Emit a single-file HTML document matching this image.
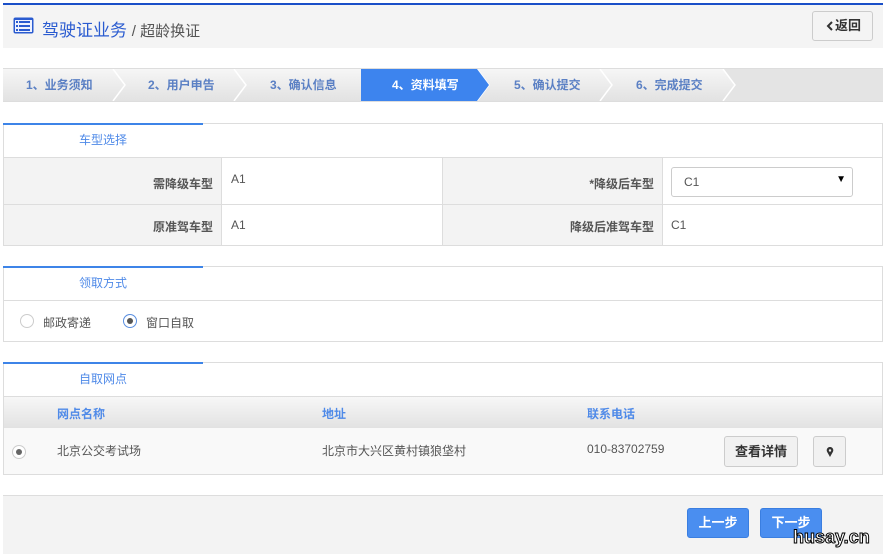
<!DOCTYPE html>
<html><head><meta charset="utf-8"><style>
*{box-sizing:border-box;margin:0;padding:0}
body{width:886px;height:554px;background:#fff;font-family:"Liberation Sans","Noto Sans CJK SC",sans-serif;font-size:12px;color:#555;position:relative;overflow:hidden}
.abs{position:absolute}
.hdr{left:3px;top:3px;width:880px;height:45px;background:#f4f4f4;border-top:2px solid #1a4fc8}
.steps{left:3px;top:68px;width:880px;height:34px;background:linear-gradient(#f6f6f6,#e2e2e2);border-top:1px solid #ddd;border-bottom:1px solid #ddd}
.st{position:absolute;top:0;height:32px;line-height:32px;font-weight:bold;color:#5b80c4;font-size:12px}
.box{left:3px;width:880px;border:1px solid #ddd;background:#fff}
.bh{height:34px;border-bottom:1px solid #ddd;position:relative}
.bh:before{content:"";position:absolute;left:-1px;top:-1px;width:200px;height:2px;background:#3d84e8}
.bh span{position:absolute;left:75px;top:7px;color:#4f8ae8;font-size:12px}
.cell{position:absolute;height:100%;border-right:1px solid #ddd;font-size:12px}
.lab{background:#f3f3f3;text-align:right;padding-right:8px;font-weight:bold;color:#555}
.btn{position:absolute;background:#4a8ef0;color:#fff;border:1px solid #3a7ee0;border-radius:3px;text-align:center;font-weight:bold;font-size:13px}
</style></head><body>
<div class="abs hdr">
 <svg class="abs" style="left:10px;top:12px" width="21" height="17" viewBox="0 0 21 17"><rect x="0.5" y="0.5" width="20" height="16" rx="2" fill="#2a5bd0"/><rect x="2" y="3" width="17" height="12" fill="#eef2ff"/><rect x="3" y="4" width="2" height="2" fill="#2a5bd0"/><rect x="6" y="4" width="11" height="2" fill="#2a5bd0"/><rect x="3" y="8" width="2" height="2" fill="#2a5bd0"/><rect x="6" y="8" width="11" height="2" fill="#2a5bd0"/><rect x="3" y="12" width="2" height="2" fill="#2a5bd0"/><rect x="6" y="12" width="11" height="2" fill="#2a5bd0"/></svg>
 <div class="abs" style="left:39px;top:11px;font-size:17px;color:#2a5bd0">驾驶证业务 <span style="color:#555;font-size:15px">/ 超龄换证</span></div>
 <div class="abs" style="left:809px;top:6px;width:61px;height:30px;border:1px solid #ccc;border-radius:3px;background:#f4f4f4;line-height:28px;font-weight:bold;color:#333;font-size:13px"><svg class="abs" style="left:13px;top:9px" width="7" height="10"><path d="M6 1 L2 5 L6 9" stroke="#333" stroke-width="2" fill="none"/></svg><span style="position:absolute;left:22px">返回</span></div>
</div>
<div class="abs steps">
 <svg class="abs" style="left:0;top:0" width="880" height="32"><path d="M110 0 L122 16 L110 32 M231 0 L243 16 L231 32 M474 0 L486 16 L474 32 M597 0 L609 16 L597 32" stroke="#fff" stroke-width="1.5" fill="none"/><path d="M720 0 L732 16 L720 32 L880 32 L880 0Z" fill="#e4e4e4"/><path d="M720 0 L732 16 L720 32" stroke="#fff" stroke-width="1.5" fill="none"/><path d="M358 0 L474 0 L486 16 L474 32 L358 32 Z" fill="#3d84ee"/></svg>
 <div class="st" style="left:23px">1、业务须知</div>
 <div class="st" style="left:145px">2、用户申告</div>
 <div class="st" style="left:267px">3、确认信息</div>
 <div class="st" style="left:389px;color:#fff">4、资料填写</div>
 <div class="st" style="left:511px">5、确认提交</div>
 <div class="st" style="left:633px">6、完成提交</div>
</div>

<div class="abs box" style="top:123px;height:123px">
 <div class="bh"><span>车型选择</span></div>
 <div style="position:relative;height:47px;border-bottom:1px solid #ddd">
  <div class="cell lab" style="left:0;width:218px;padding-top:17px">需降级车型</div>
  <div class="cell" style="left:218px;width:221px;padding:14px 9px">A1</div>
  <div class="cell lab" style="left:439px;width:220px;padding-top:17px">*降级后车型</div>
  <div class="cell" style="left:659px;width:220px;border:none">
   <div class="abs" style="left:8px;top:9px;width:182px;height:30px;border:1px solid #ccc;border-radius:3px;padding:7px 12px;color:#555">C1<span style="position:absolute;right:6px;top:6px;font-size:10px;color:#000">▼</span></div>
  </div>
 </div>
 <div style="position:relative;height:40px">
  <div class="cell lab" style="left:0;width:218px;padding-top:13px">原准驾车型</div>
  <div class="cell" style="left:218px;width:221px;padding:13px 9px">A1</div>
  <div class="cell lab" style="left:439px;width:220px;padding-top:13px">降级后准驾车型</div>
  <div class="cell" style="left:659px;width:220px;border:none;padding:13px 8px">C1</div>
 </div>
</div>

<div class="abs box" style="top:266px;height:76px">
 <div class="bh"><span>领取方式</span></div>
 <div class="abs" style="left:16px;top:47px;width:14px;height:14px;border:1px solid #ccc;border-radius:50%"></div>
 <div class="abs" style="left:39px;top:47px">邮政寄递</div>
 <div class="abs" style="left:119px;top:47px;width:14px;height:14px;border:1px solid #5a8fe0;border-radius:50%"><div style="margin:3px;width:6px;height:6px;border-radius:50%;background:#555"></div></div>
 <div class="abs" style="left:142px;top:47px">窗口自取</div>
</div>

<div class="abs box" style="top:362px;height:113px">
 <div class="bh"><span>自取网点</span></div>
 <div style="position:relative;height:31px;background:linear-gradient(#f7f7f7,#e2e2e2);font-weight:bold;color:#4f8ae8">
  <div class="abs" style="left:53px;top:8px">网点名称</div>
  <div class="abs" style="left:318px;top:8px">地址</div>
  <div class="abs" style="left:583px;top:8px">联系电话</div>
 </div>
 <div style="position:relative;height:46px;background:#f9f9f9">
  <div class="abs" style="left:8px;top:17px;width:14px;height:14px;border:1px solid #ccc;border-radius:50%;background:#fff"><div style="margin:3px;width:6px;height:6px;border-radius:50%;background:#666"></div></div>
  <div class="abs" style="left:53px;top:14px">北京公交考试场</div>
  <div class="abs" style="left:318px;top:14px">北京市大兴区黄村镇狼垡村</div>
  <div class="abs" style="left:583px;top:14px">010-83702759</div>
  <div class="abs" style="left:720px;top:8px;width:74px;height:31px;border:1px solid #ccc;border-radius:3px;background:#f1f1f1;text-align:center;line-height:29px;font-weight:bold;color:#333;font-size:13px">查看详情</div>
  <div class="abs" style="left:809px;top:8px;width:33px;height:31px;border:1px solid #ccc;border-radius:3px;background:#f1f1f1"><svg class="abs" style="left:12px;top:10px" width="8" height="11"><path d="M4 10 L1.2 5 A3.3 3.3 0 1 1 6.8 5 Z" fill="#333"/><circle cx="4" cy="3.5" r="1.2" fill="#f1f1f1"/></svg></div>
 </div>
</div>

<div class="abs" style="left:3px;top:495px;width:880px;height:59px;background:#f3f3f3;border-top:1px solid #ddd"></div>
<div class="btn" style="left:687px;top:508px;width:62px;height:30px;line-height:28px">上一步</div>
<div class="btn" style="left:760px;top:508px;width:62px;height:30px;line-height:28px">下一步</div>
<div class="abs" style="left:793px;top:527px;font-size:18px;font-weight:bold;color:#fff;-webkit-text-stroke:1px #000">husay.cn</div>
</body></html>
